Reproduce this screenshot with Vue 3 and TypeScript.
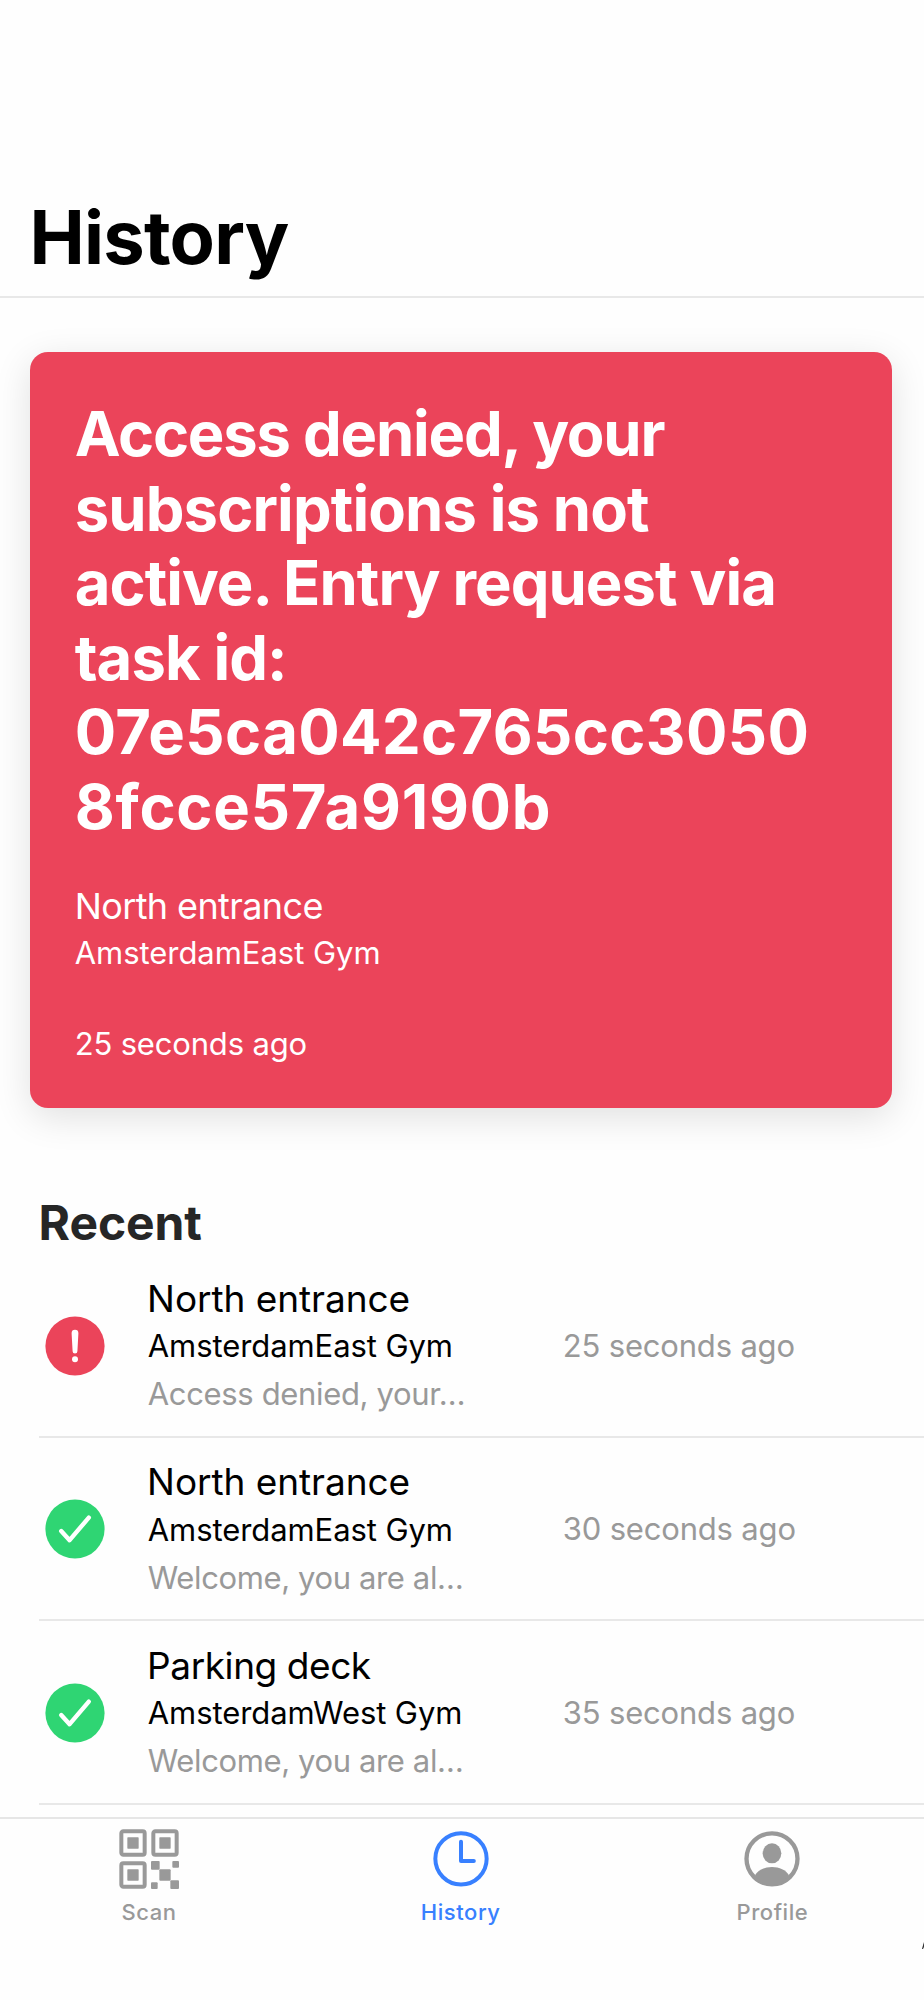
<script setup lang="ts">
interface TextLine {
  text: string
  tone: string
}

interface HistoryEntry {
  id: number
  ok: boolean
  door: string
  doorTone: string
  gym: string
  message: string
  messageTone: string
  time: string
}

const titleLines: TextLine[] = [
  { text: 'Access denied, your', tone: 't1' },
  { text: 'subscriptions is not', tone: 't2' },
  { text: 'active. Entry request via', tone: 't3' },
  { text: 'task id:', tone: 't4' },
  { text: '07e5ca042c765cc3050', tone: 't5' },
  { text: '8fcce57a9190b', tone: 't6' },
]

const entries: HistoryEntry[] = [
  { id: 1, ok: false, door: 'North entrance', doorTone: 'regular', gym: 'AmsterdamEast Gym', message: 'Access denied, your…', messageTone: 'denied', time: '25 seconds ago' },
  { id: 2, ok: true, door: 'North entrance', doorTone: 'regular', gym: 'AmsterdamEast Gym', message: 'Welcome, you are al…', messageTone: 'welcome', time: '30 seconds ago' },
  { id: 3, ok: true, door: 'Parking deck', doorTone: 'tight', gym: 'AmsterdamWest Gym', message: 'Welcome, you are al…', messageTone: 'welcome', time: '35 seconds ago' },
]
</script>

<template>
  <div class="app">
    <header class="header">
      <h1>History</h1>
    </header>

    <main class="content">
      <section class="card">
        <h2 class="card-title">
          <span v-for="line in titleLines" :key="line.tone" :class="line.tone">{{ line.text }}</span>
        </h2>
        <p class="card-door">North entrance</p>
        <p class="card-gym">AmsterdamEast Gym</p>
        <p class="card-time">25 seconds ago</p>
      </section>

      <h3 class="recent">Recent</h3>
      <ul class="list">
        <li v-for="entry in entries" :key="entry.id" class="row">
          <svg v-if="entry.ok" class="status" viewBox="0 0 60 60">
            <circle cx="30" cy="30" r="29.6" fill="#2fd573" />
            <path d="M16.2 32 24.6 41.2 43.8 18.6" fill="none" stroke="#fff" stroke-width="4.4" stroke-linecap="round" stroke-linejoin="round" />
          </svg>
          <svg v-else class="status" viewBox="0 0 60 60">
            <circle cx="30" cy="30" r="29.6" fill="#eb445a" />
            <path d="M26.6 17.2a3.4 3.4 0 0 1 6.8 0L32.4 35.2a2.4 2.4 0 0 1-4.8 0Z" fill="#fff" />
            <circle cx="30" cy="43.2" r="3" fill="#fff" />
          </svg>
          <div class="info">
            <p class="door" :class="entry.doorTone">{{ entry.door }}</p>
            <p class="gym">{{ entry.gym }}</p>
            <p class="message" :class="entry.messageTone">{{ entry.message }}</p>
          </div>
          <span class="time">{{ entry.time }}</span>
        </li>
      </ul>
    </main>

    <nav class="tabs">
      <a class="tab">
        <svg viewBox="0 0 180 180" fill="currentColor">
          <g fill="none" stroke="currentColor" stroke-width="12">
            <rect x="7" y="7" width="70" height="70" rx="6" />
            <rect x="103" y="7" width="70" height="70" rx="6" />
            <rect x="7" y="103" width="70" height="70" rx="6" />
          </g>
          <rect x="25" y="25" width="34" height="34" rx="2" />
          <rect x="121" y="25" width="34" height="34" rx="2" />
          <rect x="25" y="121" width="34" height="34" rx="2" />
          <rect x="96" y="96" width="26" height="26" rx="3" />
          <rect x="160" y="96" width="20" height="20" rx="3" />
          <rect x="121" y="121" width="34" height="34" rx="3" />
          <rect x="96" y="160" width="20" height="20" rx="3" />
          <rect x="154" y="154" width="26" height="26" rx="3" />
        </svg>
        <span>Scan</span>
      </a>
      <a class="tab active">
        <svg viewBox="0 0 180 180" fill="none" stroke="currentColor" stroke-width="12" stroke-linecap="round" stroke-linejoin="round">
          <circle cx="90" cy="89.5" r="77" />
          <path d="M90 38.5V96h38.5" />
        </svg>
        <span>History</span>
      </a>
      <a class="tab">
        <svg viewBox="0 0 180 180" fill="currentColor">
          <circle cx="90" cy="89.5" r="76.5" fill="none" stroke="currentColor" stroke-width="13" />
          <ellipse cx="90" cy="73" rx="28" ry="30" />
          <path d="M39 139C48 123 68 114 90 114s42 9 51 25C128 158 110 168 90 168S52 158 39 139Z" />
        </svg>
        <span>Profile</span>
      </a>
    </nav>
    <svg class="edge-mark" viewBox="0 0 2 7"><path d="M0 7 1.2 2.5 2 0V5L1 7Z" fill="#333" /></svg>
  </div>
</template>

<style>
body {
  background: #fefefe;
}
</style>

<style scoped>
.app {
  position: relative;
  display: flex;
  flex-direction: column;
  width: 924px;
  height: 2000px;
  overflow: hidden;
  background: #fefefe;
  color: #000;
  font-family: Inter, "Liberation Sans", sans-serif;
}
h1, h2, h3, p, ul {
  margin: 0;
  padding: 0;
}
.header {
  flex: none;
  box-sizing: border-box;
  height: 298px;
  padding: 192px 29.5px 0;
  border-bottom: 2px solid #e8e8e8;
}
h1 {
  font-size: 74px;
  line-height: 90px;
  font-weight: 700;
  letter-spacing: -0.78px;
}
.content {
  flex: none;
  height: 1518.5px;
  overflow: hidden;
}
.card {
  box-sizing: border-box;
  height: 756.3px;
  margin: 54px 32px 0 29.7px;
  padding: 45px 45px 0;
  border-radius: 18px;
  background: #eb445a;
  color: #fff;
  box-shadow: 0 9px 37px rgba(0, 0, 0, 0.12);
}
.card-title {
  font-size: 61.5px;
  line-height: 74.6px;
  font-weight: 700;
}
.card-title span {
  display: block;
  white-space: nowrap;
}
.t1 { letter-spacing: -1.23px; }
.t2 { letter-spacing: -0.87px; }
.t3 { letter-spacing: -0.95px; word-spacing: -0.7px; }
.t4 { letter-spacing: -0.9px; }
.t5 { letter-spacing: 0.36px; }
.t6 { letter-spacing: 0.76px; }
.card-door {
  margin: 38.6px 0 0;
  font-size: 36px;
  line-height: 46px;
  letter-spacing: -0.61px;
}
.card-gym {
  margin-top: 1px;
  font-size: 31px;
  line-height: 46px;
  letter-spacing: -0.04px;
}
.card-time {
  margin-top: 44.4px;
  font-size: 31px;
  line-height: 46px;
  letter-spacing: -0.17px;
}
.recent {
  margin: 86px 0 0 38.6px;
  color: #262626;
  font-size: 48px;
  line-height: 58px;
  font-weight: 700;
  letter-spacing: -0.1px;
}
.list {
  margin: 2.2px 0 0 39px;
  list-style: none;
}
.row {
  display: grid;
  grid-template-columns: 60px 373.4px 1fr;
  column-gap: 42.3px;
  align-items: center;
  box-sizing: border-box;
  height: 183.5px;
  padding: 0.6px 0 0 5.8px;
  border-bottom: 2px solid #e8e8e8;
}
.status {
  display: block;
  width: 60px;
  height: 60px;
}
.info {
  padding-top: 2.2px;
}
.info p {
  white-space: nowrap;
}
.door {
  font-size: 37px;
  line-height: 46px;
  letter-spacing: -0.06px;
}
.door.tight {
  letter-spacing: -0.43px;
}
.gym {
  margin: 1.4px 0 0 0.7px;
  font-size: 31px;
  line-height: 46px;
  letter-spacing: -0.08px;
}
.message {
  margin: 2px 0 0 0.7px;
  color: #999;
  font-size: 31px;
  line-height: 46px;
}
.denied { letter-spacing: -0.34px; }
.welcome { letter-spacing: -0.38px; }
.time {
  color: #999;
  font-size: 31px;
  line-height: 46px;
  letter-spacing: -0.18px;
}
.tabs {
  flex: 1;
  display: grid;
  grid-template-columns: repeat(3, 311.7px);
  justify-content: center;
  padding-right: 2.6px;
  border-top: 2px solid #e6e6e6;
  background: #fefefe;
}
.tab {
  display: flex;
  flex-direction: column;
  align-items: center;
  padding-top: 10.5px;
  color: #999;
}
.tab svg {
  width: 60px;
  height: 60px;
}
.tab span {
  margin-top: 10px;
  font-size: 22px;
  line-height: 26px;
  font-weight: 500;
  letter-spacing: 0.56px;
}
.tab.active {
  color: #3880ff;
}
.edge-mark {
  position: absolute;
  right: 0;
  top: 1942px;
  width: 2px;
  height: 7px;
}
</style>
